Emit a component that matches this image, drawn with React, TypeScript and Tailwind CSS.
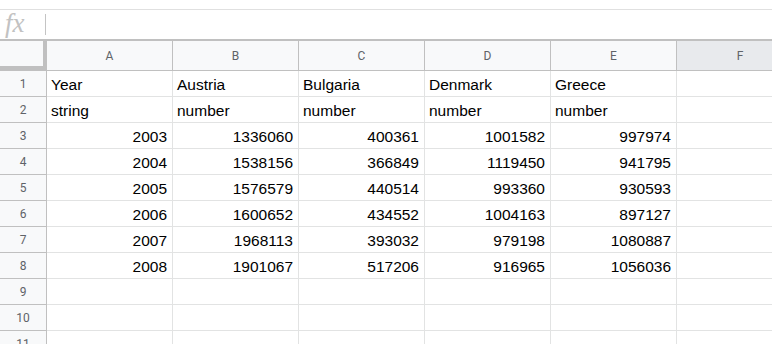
import React from "react";

const cols = ["A", "B", "C", "D", "E"];

const rows: string[][] = [
  ["Year", "Austria", "Bulgaria", "Denmark", "Greece"],
  ["string", "number", "number", "number", "number"],
  ["2003", "1336060", "400361", "1001582", "997974"],
  ["2004", "1538156", "366849", "1119450", "941795"],
  ["2005", "1576579", "440514", "993360", "930593"],
  ["2006", "1600652", "434552", "1004163", "897127"],
  ["2007", "1968113", "393032", "979198", "1080887"],
  ["2008", "1901067", "517206", "916965", "1056036"],
  ["", "", "", "", ""],
  ["", "", "", "", ""],
  ["", "", "", "", ""],
];

export default function App() {
  return (
    <div className="h-[344px] w-[772px] overflow-hidden bg-white font-['Liberation_Sans',Arial,sans-serif]">
      {/* formula bar */}
      <div className="h-[10px] border-b border-[#e0e0e0]" />
      <div className="flex h-[29px] items-center">
        <div className="w-[45px] pb-[2px] pl-[5px] font-['Liberation_Serif',serif] text-[27px] italic leading-none text-[#c2c2c2]">
          fx
        </div>
        <div className="h-[21px] w-px bg-[#c4c4c4]" />
      </div>
      <div className="h-[2px] bg-[#c0c0c0]" />

      {/* column headers */}
      <div className="flex h-[30px]">
        <div className="h-full w-[47px] shrink-0 border-r-4 border-b-[5px] border-[#c0c0c0] bg-[#f8f9fa]" />
        {cols.map((c) => (
          <div
            key={c}
            className="flex h-full w-[126px] shrink-0 items-center justify-center border-r border-b border-[#c0c0c0] bg-[#f8f9fa] font-['Roboto',sans-serif] text-[12px] text-[#5f6368]"
          >
            {c}
          </div>
        ))}
        <div className="flex h-full w-[126px] shrink-0 items-center justify-center border-b border-[#c0c0c0] bg-[#e8eaed] font-['Roboto',sans-serif] text-[12px] text-[#5f6368]">
          F
        </div>
      </div>

      {/* data rows */}
      {rows.map((r, i) => (
        <div key={i} className="flex h-[26px]">
          <div className="flex h-full w-[47px] shrink-0 items-center justify-center border-r border-b border-[#c0c0c0] bg-[#f8f9fa] font-['Roboto',sans-serif] text-[12px] text-[#5f6368]">
            {i + 1}
          </div>
          {r.map((v, j) => {
            const num = /^\d+$/.test(v);
            return (
              <div
                key={j}
                className={
                  num
                    ? "flex h-full w-[126px] shrink-0 items-end justify-end border-r border-b border-[#e2e3e3] pr-[5px] pb-[4px] text-[15.5px] leading-none text-black"
                    : "flex h-full w-[126px] shrink-0 items-end border-r border-b border-[#e2e3e3] pl-[4px] pb-[4px] text-[15.5px] leading-none text-black"
                }
              >
                {v}
              </div>
            );
          })}
          <div className="h-full w-[126px] shrink-0 border-b border-[#e2e3e3]" />
        </div>
      ))}
    </div>
  );
}
